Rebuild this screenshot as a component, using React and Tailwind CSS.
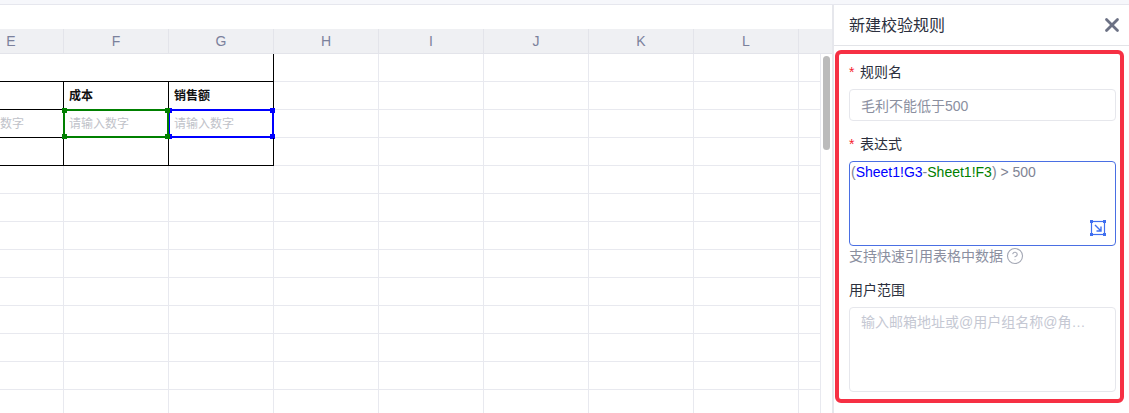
import { CircleHelp, X } from "lucide-react";

const fontStack = "font-['Liberation_Sans','Noto_Sans_CJK_SC',sans-serif]";
const columns = ["E", "F", "G", "H", "I", "J", "K", "L", ""];
const plainRows = Array.from({ length: 9 });

// Corner handle of a selected range
function Handle({ className }) {
  return <span className={`absolute h-[5px] w-[5px] ${className}`} />;
}

// Green / blue range around a referenced cell
function Selection({ border, handle, className = "" }) {
  return (
    <div className={`absolute -top-px -left-px -right-px -bottom-px border-2 ${border} ${className}`}>
      <Handle className={`-top-[3px] -left-[3px] ${handle}`} />
      <Handle className={`-top-[3px] -right-[3px] ${handle}`} />
      <Handle className={`-bottom-[3px] -left-[3px] ${handle}`} />
      <Handle className={`-bottom-[3px] -right-[3px] ${handle}`} />
    </div>
  );
}

function TableCell({ children, bold, placeholder, selection }) {
  return (
    <div
      className={`relative flex items-center whitespace-nowrap border-r border-b border-black pl-[5px] text-xs ${
        bold ? "font-semibold text-[#111]" : ""
      } ${placeholder ? "text-[#c0c2c9]" : ""}`}
    >
      {children}
      {selection}
    </div>
  );
}

function GridRow({ from }) {
  return columns.slice(from).map((col, i) => (
    <div key={i} className="border-r border-b border-[#e8e9ef]" />
  ));
}

function Sheet() {
  return (
    <div className="flex min-w-0 flex-1 flex-col overflow-hidden">
      <div className="h-6 shrink-0" />
      <div className="-ml-[41px] flex h-[25px] shrink-0">
        {columns.map((col, i) => (
          <div
            key={i}
            className="flex w-[105px] shrink-0 items-center justify-center border-r border-b border-[#e3e4ea] bg-[#eff0f3] text-sm text-[#7b819c]"
          >
            {col}
          </div>
        ))}
      </div>
      <div className="flex min-h-0 flex-1">
        <div className="min-w-0 flex-1 overflow-hidden">
          <div className="-ml-[41px] grid w-[945px] grid-cols-[repeat(9,105px)] auto-rows-[28px]">
            <div className="col-span-3 border-r border-b border-black" />
            <GridRow from={3} />

            <TableCell />
            <TableCell bold>成本</TableCell>
            <TableCell bold>销售额</TableCell>
            <GridRow from={3} />

            <TableCell placeholder>请输入数字</TableCell>
            <TableCell
              placeholder
              selection={<Selection border="border-[#008000]" handle="bg-[#008000]" className="z-10" />}
            >
              请输入数字
            </TableCell>
            <TableCell placeholder selection={<Selection border="border-[#0000ff]" handle="bg-[#0000ff]" />}>
              请输入数字
            </TableCell>
            <GridRow from={3} />

            <TableCell />
            <TableCell />
            <TableCell />
            <GridRow from={3} />

            {plainRows.map((_, i) => (
              <GridRow key={i} from={0} />
            ))}
          </div>
        </div>
        <div className="w-3 shrink-0 border-l border-[#e8e9ef] pt-[2px] pl-[2px]">
          <div className="h-[94px] w-[7px] rounded-full bg-[#bbbbbb]" />
        </div>
      </div>
    </div>
  );
}

function FieldLabel({ required, children }) {
  return (
    <div className="flex h-5 items-center text-sm leading-5 text-[#2b2f3d]">
      {required && <span className="mr-[5px] w-[6px] text-[#f5222d]">*</span>}
      {children}
    </div>
  );
}

function RangeIcon() {
  return (
    <svg viewBox="0 0 16 16" width="16" height="16" fill="none" stroke="#3f6ff0" strokeWidth="1.2">
      <rect x="1.5" y="1.5" width="13" height="13" />
      <rect x="0" y="0" width="3" height="3" fill="#3f6ff0" stroke="none" />
      <rect x="13" y="0" width="3" height="3" fill="#3f6ff0" stroke="none" />
      <rect x="0" y="13" width="3" height="3" fill="#3f6ff0" stroke="none" />
      <rect x="13" y="13" width="3" height="3" fill="#3f6ff0" stroke="none" />
      <path d="M5 5l5.5 5.5M11 6.5V11H6.5" strokeWidth="1.4" />
    </svg>
  );
}

function RulePanel() {
  return (
    <aside className="flex w-[297px] shrink-0 flex-col border-l-2 border-[#e6e7ec] bg-white">
      <div className="flex h-[41px] shrink-0 items-center justify-between border-b border-[#e3e4e8] pt-[2px] pr-[6px] pl-[15px]">
        <span className="text-base text-[#2b2f3d]">新建校验规则</span>
        <X size={22} strokeWidth={3} className="-mt-[2px] text-[#6c7184]" />
      </div>
      <div className="mt-1 mr-[5px] ml-[1px] flex h-[353px] flex-col rounded-md border-4 border-[#f63044] pt-[8px] pr-[4px] pl-[10px]">
        <FieldLabel required>规则名</FieldLabel>
        <div className="mt-[7px] flex h-8 items-center rounded-sm border border-[#e6e7ec] px-[11px] pt-[2px] text-sm text-[#8b8f9f]">
          毛利不能低于500
        </div>
        <div className="mt-[13px]">
          <FieldLabel required>表达式</FieldLabel>
        </div>
        <div className="relative mt-[7px] h-[85px] rounded-sm border border-[#4a6fe3] pl-px text-sm leading-5 text-[#7f8494]">
          (<span className="text-[#0000ff]">Sheet1!G3</span>-<span className="text-[#008000]">Sheet1!F3</span>) &gt; 500
          <div className="absolute right-[9px] bottom-[9px] h-4 w-4">
            <RangeIcon />
          </div>
        </div>
        <div className="flex h-5 items-center text-sm text-[#8b8f9f]">
          支持快速引用表格中数据
          <CircleHelp size={18} strokeWidth={1.5} className="ml-[3px] text-[#a5a9b6]" />
        </div>
        <div className="mt-[14px]">
          <FieldLabel>用户范围</FieldLabel>
        </div>
        <div className="mt-[7px] h-[85px] rounded-sm border border-[#e6e7ec] px-[11px] py-[4px] text-sm leading-5 text-[#c5c8d3]">
          输入邮箱地址或@用户组名称@角…
        </div>
      </div>
    </aside>
  );
}

export default function App() {
  return (
    <div className={`flex h-[413px] w-[1129px] flex-col overflow-hidden bg-white ${fontStack}`}>
      <div className="h-[5px] shrink-0 border-b border-[#e6e7ee] bg-[#f6f7fb]" />
      <div className="flex min-h-0 flex-1">
        <Sheet />
        <RulePanel />
      </div>
    </div>
  );
}
